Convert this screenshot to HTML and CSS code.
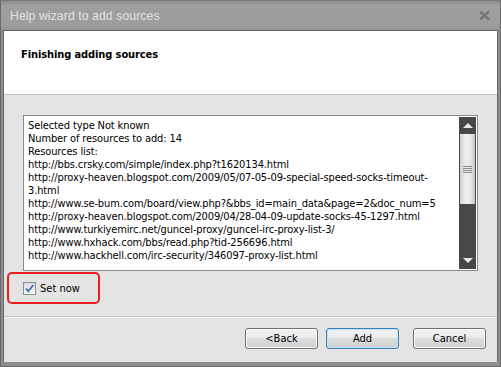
FILE: index.html
```html
<!DOCTYPE html>
<html>
<head>
<meta charset="utf-8">
<link rel="stylesheet" href="styles.css">
</head>
<body>
<div class="window">
  <div class="titlebar">
    <span class="title">Help wizard to add sources</span>
    <svg class="close" width="11" height="9" viewBox="0 0 11 9"><path d="M1 0.5 L10 8.5 M10 0.5 L1 8.5" stroke="#767676" stroke-width="2.4" fill="none"/></svg>
  </div>
  <div class="client">
    <div class="header">Finishing adding sources</div>
    <div class="body">
      <div class="listbox">
        <div class="lines">
          <div>Selected type Not known</div>
          <div>Number of resources to add: 14</div>
          <div>Resources list:</div>
          <div>http://bbs.crsky.com/simple/index.php?t1620134.html</div>
          <div>http://proxy-heaven.blogspot.com/2009/05/07-05-09-special-speed-socks-timeout-</div>
          <div>3.html</div>
          <div>http://www.se-bum.com/board/view.php?&amp;bbs_id=main_data&amp;page=2&amp;doc_num=5</div>
          <div>http://proxy-heaven.blogspot.com/2009/04/28-04-09-update-socks-45-1297.html</div>
          <div>http://www.turkiyemirc.net/guncel-proxy/guncel-irc-proxy-list-3/</div>
          <div>http://www.hxhack.com/bbs/read.php?tid-256696.html</div>
          <div>http://www.hackhell.com/irc-security/346097-proxy-list.html</div>
        </div>
        <div class="scrollbar">
          <div class="arrow up"></div>
          <div class="thumb"><span></span><span></span><span></span><span></span></div>
          <div class="track"></div>
          <div class="arrow down"></div>
        </div>
      </div>
      <div class="setnow">
        <span class="check"><svg width="11" height="11" viewBox="0 0 11 11"><path d="M2 5.5 L4.3 8.3 L9.3 2" stroke="#3a6fc4" stroke-width="1.8" fill="none"/></svg></span>
        <span>Set now</span>
      </div>
    </div>
    <div class="footer">
      <button class="btn">&lt;Back</button>
      <button class="btn default">Add</button>
      <button class="btn cancel">Cancel</button>
    </div>
  </div>
</div>
</body>
</html>
```
FILE: styles.css
```css
html, body {
  margin: 0;
  padding: 0;
  background: #ffffff;
}
.window {
  width: 501px;
  height: 367px;
  box-sizing: border-box;
  background: #8f8f8f;
  border: 1px solid #6a6a6a;
  border-top-color: #7a7a7a;
  display: flex;
  flex-direction: column;
  padding: 0 2px 4px 2px;
  font-family: "DejaVu Sans", Tahoma, sans-serif;
  font-size: 11px;
  color: #000;
}
.titlebar {
  height: 29px;
  flex: none;
  display: flex;
  align-items: center;
  justify-content: space-between;
  padding: 0 10px 0 9px;
  margin: 0 -2px;
  background: linear-gradient(#8c8c8c, #9f9f9f 4px, #9d9d9d 24px, #969696 29px);
}
.title {
  font-family: "Liberation Sans", Arial, sans-serif;
  font-size: 12.2px;
  color: #e2e2e2;
  letter-spacing: 0.1px;
}
.close {
  display: block;
}
.client {
  flex: 1;
  display: flex;
  flex-direction: column;
  background: #e4e4e4;
  border: 1px solid #666;
  border-bottom: none;
}
.header {
  height: 64px;
  flex: none;
  background: #fff;
  border-bottom: 1px solid #c2c2c2;
  padding: 17px 0 0 17px;
  box-sizing: border-box;
  font-family: "DejaVu Sans Condensed", Tahoma, sans-serif;
  font-weight: bold;
  font-size: 11px;
  letter-spacing: -0.1px;
}
.body {
  flex: 1;
  display: flex;
  flex-direction: column;
  padding: 20px 19px 0 19px;
  border-bottom: 1px solid #c6c6c6;
  box-shadow: 0 1px 0 #f6f6f6;
}
.listbox {
  height: 156px;
  box-sizing: border-box;
  background: #fff;
  border: 1px solid #8a8a8a;
  display: flex;
  padding: 1px;
}
.lines {
  flex: 1;
  padding: 2px 3px;
  line-height: 13px;
  font-family: "DejaVu Sans Condensed", Tahoma, sans-serif;
  font-size: 11px;
  letter-spacing: -0.12px;
  white-space: nowrap;
  overflow: hidden;
}
.scrollbar {
  width: 17px;
  display: flex;
  flex-direction: column;
  background: #474747;
}
.arrow {
  height: 17px;
  flex: none;
  display: flex;
  align-items: center;
  justify-content: center;
}
.arrow::after {
  content: "";
  border-left: 5px solid transparent;
  border-right: 5px solid transparent;
}
.arrow.up::after {
  border-bottom: 5px solid #e8e8e8;
}
.arrow.down::after {
  border-top: 5px solid #e8e8e8;
}
.thumb {
  height: 70px;
  margin: 0 1px;
  background: linear-gradient(90deg, #d0d0d0, #f0f0f0 40%, #e6e6e6 70%, #c8c8c8);
  display: flex;
  flex-direction: column;
  align-items: center;
  justify-content: center;
  gap: 1px;
}
.thumb span {
  width: 9px;
  height: 1px;
  background: #888;
}
.track {
  flex: 1;
}
.setnow {
  width: 93px;
  height: 32px;
  margin: 1px 0 0 -16px;
  box-sizing: border-box;
  border: 2px solid #ee1c1c;
  border-radius: 5px;
  display: flex;
  align-items: center;
  padding-left: 14px;
  gap: 4px;
  font-family: "DejaVu Sans Condensed", Tahoma, sans-serif;
  font-size: 11px;
}
.check {
  width: 11px;
  height: 11px;
  border: 1px solid #8e8f8f;
  background: linear-gradient(#dcdcdc, #fafafa);
  display: flex;
}
.footer {
  height: 45px;
  flex: none;
  display: flex;
  align-items: center;
  justify-content: flex-end;
  padding: 0 11px 2px 0;
  gap: 8px;
  box-sizing: border-box;
}
.btn {
  width: 73px;
  height: 21px;
  box-sizing: border-box;
  border: 1px solid #707070;
  border-radius: 3px;
  background: linear-gradient(#f2f2f2, #ebebeb 45%, #dddddd 50%, #cfcfcf);
  font-family: "DejaVu Sans Condensed", Tahoma, sans-serif;
  font-size: 11px;
  color: #000;
  padding: 0;
  box-shadow: inset 0 0 0 1px #fcfcfc;
}
.btn.default {
  border-color: #3c7fb1;
  box-shadow: inset 0 0 0 1px #bfe4f8;
}
.btn.cancel {
  margin-left: 6px;
}
```
